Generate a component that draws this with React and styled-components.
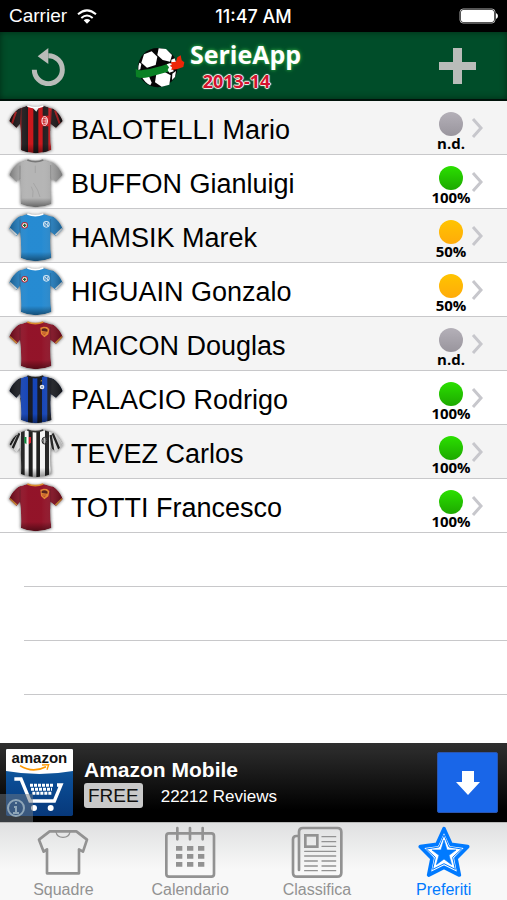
import { useId } from "react";
import styled, { createGlobalStyle } from "styled-components";

const GlobalStyle = createGlobalStyle`
  * {
    box-sizing: border-box;
  }

  body {
    margin: 0;
    background: #fff;
    font-family: "Liberation Sans", Arial, sans-serif;
  }

  a {
    color: inherit;
    text-decoration: none;
  }

  button {
    padding: 0;
    border: 0;
    background: none;
    cursor: pointer;
  }

  svg {
    display: block;
    flex-shrink: 0;
  }
`;

const Screen = styled.div`
  display: flex;
  flex-direction: column;
  min-height: 100vh;
`;

/* status bar */
const StatusBar = styled.div`
  display: grid;
  grid-template-columns: 1fr auto 1fr;
  align-items: center;
  height: 32px;
  padding: 0 9px;
  background: #000;
  color: #fff;
`;

const Carrier = styled.div`
  display: flex;
  align-items: center;
  gap: 10px;
  font-size: 19px;
  line-height: 32px;
`;

const Clock = styled.time`
  font-family: Inter, sans-serif;
  font-size: 18px;
  font-weight: 500;
`;

const Battery = styled.div`
  justify-self: end;
`;

/* header */
const Header = styled.header`
  display: flex;
  align-items: center;
  justify-content: space-between;
  height: 69px;
  padding: 0 31px;
  background: #004d29;
  border-bottom: 2px solid #00120a;
  box-shadow: inset 0 0 6px #002915;
`;

const IconButton = styled.button`
  color: #b9bcb9;
`;

const Logo = styled.h1`
  display: flex;
  align-items: center;
  gap: 3px;
  margin: 0 70px 0 0;
  padding-top: 3px;
  font-family: "Open Sans", sans-serif;
  font-weight: 700;
`;

const LogoText = styled.span`
  display: flex;
  flex-direction: column;
  align-items: center;
`;

const LogoName = styled.span`
  color: #fff;
  font-size: 25px;
  line-height: 28px;
  text-shadow: 0 0 3px #35a845, 0 0 5px #1d8a3a;
`;

const LogoSeason = styled.span`
  margin-right: 18px;
  color: #d3122f;
  font-size: 18px;
  line-height: 26px;
  text-shadow: 1px 0 1px #fff, -1px 0 1px #fff, 0 1px 1px #fff, 0 -1px 1px #fff;
`;

/* players */
const PlayerList = styled.ul`
  flex: 1;
  margin: 0;
  padding: 0;
  list-style: none;
`;

const PlayerItem = styled.li`
  height: 54px;
  border-bottom: 1px solid #c8c8ca;

  &:nth-child(odd) {
    background: #f4f4f4;
  }
`;

const PlayerLink = styled.a`
  display: flex;
  align-items: center;
  height: 53px;
  padding: 0 24px 0 6px;
`;

const PlayerName = styled.span`
  flex: 1;
  margin-left: 5px;
  padding-top: 6px;
  color: #000;
  font-size: 27px;
  line-height: 47px;
  white-space: nowrap;
`;

const Status = styled.span`
  display: flex;
  flex-direction: column;
  align-items: center;
  align-self: flex-start;
  width: 40px;
  padding-top: 11px;
  font-family: "Open Sans", sans-serif;
  font-size: 15px;
  font-weight: 700;
  line-height: 14px;
`;

const dots = {
  none: "linear-gradient(#b4b0b8, #99959d)",
  full: "linear-gradient(#2be000, #1da800)",
  half: "linear-gradient(#ffc400, #ffab0a)",
};

const Dot = styled.span`
  width: 24px;
  height: 24px;
  border-radius: 50%;
  background: ${({ $level }) => dots[$level]};
`;

const EmptyItem = styled.li`
  height: 54px;
  margin-left: 24px;
  border-bottom: 1px solid #c8c8ca;
`;

/* ad */
const Ad = styled.aside`
  position: relative;
  display: flex;
  align-items: center;
  height: 79px;
  padding: 0 9px 0 6px;
  background: linear-gradient(#2f2f2f, #000 85%);
  color: #fff;
`;

const AdIcon = styled.div`
  width: 67px;
  height: 67px;
`;

const AdBody = styled.div`
  flex: 1;
  margin-left: 11px;
`;

const AdTitle = styled.div`
  font-size: 21px;
  font-weight: 700;
  line-height: 26px;
`;

const AdMeta = styled.div`
  display: flex;
  align-items: baseline;
  gap: 18px;
  font-size: 17px;
`;

const Free = styled.span`
  padding: 0 4px;
  border-radius: 3px;
  background: #c9c9c9;
  color: #111;
  font-size: 19px;
  line-height: 25px;
`;

const Download = styled.button`
  display: flex;
  align-items: center;
  justify-content: center;
  width: 61px;
  height: 61px;
  border: 1px solid #2a55b0;
  border-radius: 2px;
  background: #1966e8;
`;

const AdInfo = styled.button`
  position: absolute;
  left: 0;
  bottom: 0;
  width: 33px;
  height: 28px;
  padding-left: 6px;
  background: rgba(110, 120, 130, 0.5);
`;

/* tabs */
const TabBar = styled.nav`
  display: grid;
  grid-template-columns: repeat(4, 1fr);
  height: 78px;
  padding-top: 3px;
  border-top: 1px solid #b8b8b8;
  background: linear-gradient(#dfe0e1, #f8f8f8 60%);
`;

const Tab = styled.a`
  display: flex;
  flex-direction: column;
  align-items: center;
  gap: 2px;
  color: ${({ $active }) => ($active ? "#007aff" : "#929292")};
  font-size: 16px;
  line-height: 20px;
`;

const shirtPath =
  "M64 15 Q88 25 112 15 L142 24 Q160 36 170 60 L150 80 L134 68 Q131 105 136 147 Q88 167 45 147 Q47 105 42 68 L31 80 L10 60 Q19 37 38 24 Z";

const kits = {
  milan: { base: "#c90f14", sleeve: "#171214", trim: "#fff" },
  keeper: { base: "#b2b2b2", sleeve: "#aaa", trim: "#777" },
  napoli: { base: "#1d86d0", sleeve: "#1f80c6", trim: "#fff", cuff: "#e8edf0" },
  roma: { base: "#8e0a20", sleeve: "#860a1e", trim: "#dc8b2b", cuff: "#e0922c" },
  inter: { base: "#0c3db4", sleeve: "#17191f", trim: "#222" },
  juve: { base: "#f5f5f5", sleeve: "#f5f5f5", trim: "#333" },
};

const Badges = ({ kit }) => {
  if (kit === "milan")
    return (
      <g fill="none" stroke="#fff" strokeWidth="3">
        <ellipse cx="116" cy="60" rx="8" ry="13" />
        <path d="M112 53h8v14h-8M112 60h8" strokeWidth="2" />
      </g>
    );
  if (kit === "napoli")
    return (
      <g>
        <circle cx="56" cy="49" r="10" fill="#b72d36" />
        <circle cx="56" cy="49" r="7" fill="#fff" />
        <path d="M56 44v10M51 49h10" stroke="#263" strokeWidth="4" />
        <circle cx="121" cy="46" r="10" fill="#d5e7f5" />
        <circle cx="121" cy="46" r="7" fill="#2d80bf" />
        <path d="M117 51v-10l8 10v-10" stroke="#fff" strokeWidth="2" fill="none" />
      </g>
    );
  if (kit === "roma")
    return (
      <g>
        <path d="M103 32l10-3 10 1 7 7-3 15-12 9-10-10z" fill="#e58a35" />
        <path d="M107 36q9-5 18 2l-1 6-17-2z" fill="#5c231d" />
        <path d="M108 48h13M112 53h6" stroke="#b5482a" strokeWidth="3" />
      </g>
    );
  if (kit === "inter")
    return (
      <g>
        <circle cx="108" cy="48" r="7" fill="#e9e9e9" />
        <circle cx="108" cy="48" r="3" fill="#7896c4" />
        <path d="M103 31l3-4 3 4z" fill="#d7a93e" />
      </g>
    );
  if (kit === "juve")
    return (
      <g>
        <path d="M55 36h7v22l-7-5z" fill="#0b8a3c" />
        <path d="M62 36h6v22h-6z" fill="#fff" />
        <path d="M68 36h7v17l-7 5z" fill="#d4202c" />
        <ellipse cx="115" cy="47" rx="7" ry="10" fill="#ddd" stroke="#222" strokeWidth="3" />
        <path d="M112 40v14M118 40v14" stroke="#222" strokeWidth="2" />
      </g>
    );
  return (
    <g fill="none" stroke="#8f8f8f" strokeWidth="3" opacity="0.4">
      <path d="M88 32v22M76 95q8 12 4 32M82 84q15 20 20 42" />
    </g>
  );
};

const Stripes = ({ kit }) => {
  if (kit === "milan")
    return (
      <path d="M46 10h20v155H46zM82 10h15v155H82zM110 76h17v89h-17zM110 10h17v34h-17z" fill="#171214" />
    );
  if (kit === "inter")
    return <path d="M66 10h14v155H66zM94 10h14v155H94zM124 10h14v155h-14zM40 80h5v85h-5z" fill="#10131c" />;
  if (kit === "juve")
    return (
      <g fill="#161616">
        <path d="M44 10h12v155H44zM68 10h12v155H68zM91 10h11v155H91zM117 10h12v155h-12z" />
      </g>
    );
  return null;
};

function Shirt({ kit }) {
  const id = useId();
  const c = kits[kit];
  return (
    <svg width="60" height="53" viewBox="0 0 180 159" aria-hidden="true">
      <defs>
        <clipPath id={`${id}c`}>
          <path d={shirtPath} />
        </clipPath>
        <linearGradient id={`${id}g`} x1="0" x2="1">
          <stop offset="0" stopColor="#000" stopOpacity="0.3" />
          <stop offset="0.35" stopColor="#fff" stopOpacity="0.04" />
          <stop offset="0.6" stopColor="#fff" stopOpacity="0.04" />
          <stop offset="1" stopColor="#000" stopOpacity="0.3" />
        </linearGradient>
        <linearGradient id={`${id}b`} x1="0" x2="0" y1="0" y2="1">
          <stop offset="0.8" stopColor="#000" stopOpacity="0" />
          <stop offset="1" stopColor="#000" stopOpacity="0.45" />
        </linearGradient>
        <filter id={`${id}f`} x="-20%" y="-20%" width="140%" height="140%">
          <feGaussianBlur stdDeviation="5" />
        </filter>
      </defs>
      <path d={shirtPath} fill="#333" stroke="#333" strokeWidth="4" opacity="0.6" filter={`url(#${id}f)`} />
      <g clipPath={`url(#${id}c)`}>
        <path d={shirtPath} fill={c.base} />
        <Stripes kit={kit} />
        <path d="M5 5H46L42 90H5z M138 5h40v85h-44z" fill={c.sleeve} />
        {kit === "milan" && (
          <path d="M30 32L18 68M147 28l14 40" stroke="#b81518" strokeWidth="6" />
        )}
        {kit === "juve" && (
          <path d="M40 25L20 70M30 28L12 60M140 25l20 48M134 30l8 50" stroke="#161616" strokeWidth="7" />
        )}
        {c.cuff && (
          <path d="M10 60l21 20M170 60l-20 20" stroke={c.cuff} strokeWidth="9" />
        )}
        <path d="M42 32v40M134 30v40" stroke="#000" strokeWidth="2" opacity="0.3" />
        <path d={shirtPath} fill={`url(#${id}g)`} />
        <path d={shirtPath} fill={`url(#${id}b)`} />
        {kit === "milan" && <path d="M74 14h28L91 32z" fill="#eee" />}
      </g>
      <path d="M64 15Q88 25 112 15" fill="none" stroke={c.trim} strokeWidth="5" />
      <Badges kit={kit} />
    </svg>
  );
}

const Wifi = () => (
  <svg width="20" height="15" viewBox="0 0 60 45" fill="none" stroke="#fff" strokeWidth="6">
    <path d="M3 16Q30-8 57 16M13 27Q30 12 47 27" />
    <path d="M20 34Q30 26 40 34L30 44z" fill="#fff" stroke="none" />
  </svg>
);

const BatteryIcon = () => (
  <svg width="39" height="16" viewBox="0 0 39 16">
    <rect x="1" y="1" width="35" height="14" rx="3" fill="none" stroke="#aaa" />
    <rect x="2" y="2" width="33" height="12" rx="2" fill="#fff" />
    <path d="M37 5q2 1 2 3t-2 3z" fill="#fff" />
  </svg>
);

const Reload = () => (
  <svg width="36" height="40" viewBox="0 0 108 120">
    <path d="M10 71A42 42 0 1 0 52 29" fill="none" stroke="currentColor" strokeWidth="15" />
    <path d="M20 31L52 6v48z" fill="currentColor" />
  </svg>
);

const Plus = () => (
  <svg width="37" height="36" viewBox="0 0 37 36">
    <path d="M14 0h9v14h14v8H23v14h-9V22H0v-8h14z" fill="currentColor" />
  </svg>
);

const Ball = () => (
  <svg width="52" height="43" viewBox="30 27 156 129">
    <circle cx="98" cy="92" r="59" fill="#050505" />
    <g fill="#fff">
      <path d="M57 52l23-9 17 16-5 25-26 8-17-15z" />
      <path d="M101 34l22 2 18 18-6 20-22-5-16-15z" />
      <path d="M139 68l10-4 7 20-8 7-9-8z" />
      <path d="M94 111l25-6 18 10-4 28-23 6-20-13z" />
      <path d="M142 110l11-8-3 18-9 9z" />
      <path d="M49 117l23 1 8 19-4 8q-17-8-27-28z" />
      <path d="M43 77l6 3-3 17-6 2q-1-12 3-22z" />
    </g>
    <path d="M32 95q9 8 24 3 34-4 73-18l7 4-5 8 6 10q-35 10-68 19-19 5-36-2z" fill="#0a8125" />
    <path d="M125 82l11-4 5 7 5 18-13 4-5-8 4-8z" fill="#fff" />
    <path d="M137 76l16-2 4-13 10-6 3 15 8 6-3 14-20 7-16 2 2-8-7-5 7-3z" fill="#ed2608" />
  </svg>
);

const Chevron = () => (
  <svg width="12" height="20" viewBox="0 0 12 20">
    <path d="M2 1l8 9-8 9" fill="none" stroke="#c7c7cc" strokeWidth="3" />
  </svg>
);

const AmazonIcon = () => (
  <svg width="67" height="67" viewBox="0 0 201 201">
    <defs>
      <linearGradient id="amazonBlue" x1="0" x2="0" y1="0" y2="1">
        <stop offset="0" stopColor="#1a6aa8" />
        <stop offset="0.5" stopColor="#0a4b93" />
        <stop offset="1" stopColor="#07387a" />
      </linearGradient>
    </defs>
    <rect width="201" height="201" rx="5" fill="url(#amazonBlue)" />
    <path d="M0 4q0-4 4-4h193q4 0 4 4v62Q100 84 0 66z" fill="#fff" />
    <text x="100" y="42" textAnchor="middle" fontFamily="Liberation Sans" fontWeight="700" fontSize="45" fill="#111">
      amazon
    </text>
    <path d="M42 50q38 24 78 3" fill="none" stroke="#f90" strokeWidth="5" />
    <path d="M108 48l20-1-5 15" fill="none" stroke="#f90" strokeWidth="4" />
    <path d="M25 90h20l27 66h73l20-48h-12" fill="none" stroke="#fff" strokeWidth="10" />
    <path
      d="M72 109h69M75 121h63M79 133h57"
      fill="none"
      stroke="#fff"
      strokeWidth="9"
      strokeDasharray="9 3"
    />
    <circle cx="84" cy="177" r="9" fill="#fff" />
    <circle cx="134" cy="177" r="9" fill="#fff" />
  </svg>
);

const SquadreIcon = () => (
  <svg width="52" height="52" viewBox="0 0 156 156" fill="none" stroke="currentColor" strokeWidth="8" strokeLinejoin="round">
    <path d="M38 16H118L150 41L138 77L126 70V142H30V70L20 77L6 41Z" />
    <path d="M57 18Q60 34 78 34T99 18" strokeWidth="4" />
  </svg>
);

const CalendarioIcon = () => (
  <svg width="52" height="52" viewBox="0 0 156 156" fill="none" stroke="currentColor" strokeWidth="8">
    <rect x="7" y="22" width="143" height="130" rx="8" />
    <path d="M40 6v34M78 6v34M116 6v34" strokeLinecap="round" />
    <path
      d="M36 60h19v14H36zM69 60h19v14H69zM102 60h19v14h-19zM36 84h19v14H36zM69 84h19v14H69zM102 84h19v14h-19zM36 108h19v14H36zM69 108h19v14H69zM102 108h19v14h-19z"
      fill="currentColor"
      stroke="none"
    />
  </svg>
);

const ClassificaIcon = () => (
  <svg width="52" height="52" viewBox="0 0 156 156" fill="none" stroke="currentColor" strokeWidth="8" strokeLinecap="round">
    <path d="M24 30H16Q6 30 6 40V140Q6 152 18 152H138Q151 152 151 140V18Q151 6 139 6H36Q24 6 24 18V132" />
    <rect x="43" y="28" width="36" height="34" />
    <path
      d="M93 32h41M93 47h41M93 61h41M41 76h93M41 90h93M41 105h38M93 105h41M41 120h38M93 120h41M41 134h38M93 134h41"
      strokeWidth="4"
    />
  </svg>
);

const PreferitiIcon = () => (
  <svg width="52" height="52" viewBox="0 0 156 156" fill="currentColor" stroke="currentColor" strokeLinejoin="round">
    <path
      d="M78 8L99 55L149 62L114 97L124 147L78 124L32 147L42 97L7 62L57 55Z"
      fill="#fff"
      strokeWidth="11"
    />
    <path
      d="M78 27L93 63L131 69L104 94L112 130L78 113L44 130L52 94L25 69L63 63Z"
      fill="none"
      strokeWidth="3"
    />
    <path d="M78 42L87 72H114L93 88L101 116L78 99L55 116L63 88L42 72H69Z" strokeWidth="2" />
  </svg>
);

const players = [
  { name: "BALOTELLI Mario", kit: "milan", level: "none", label: "n.d." },
  { name: "BUFFON Gianluigi", kit: "keeper", level: "full", label: "100%" },
  { name: "HAMSIK Marek", kit: "napoli", level: "half", label: "50%" },
  { name: "HIGUAIN Gonzalo", kit: "napoli", level: "half", label: "50%" },
  { name: "MAICON Douglas", kit: "roma", level: "none", label: "n.d." },
  { name: "PALACIO Rodrigo", kit: "inter", level: "full", label: "100%" },
  { name: "TEVEZ Carlos", kit: "juve", level: "full", label: "100%" },
  { name: "TOTTI Francesco", kit: "roma", level: "full", label: "100%" },
];

const tabs = [
  { label: "Squadre", Icon: SquadreIcon },
  { label: "Calendario", Icon: CalendarioIcon },
  { label: "Classifica", Icon: ClassificaIcon },
  { label: "Preferiti", Icon: PreferitiIcon, active: true },
];

function App() {
  return (
    <Screen>
      <GlobalStyle />
      <StatusBar>
        <Carrier>
          Carrier
          <Wifi />
        </Carrier>
        <Clock>11:47 AM</Clock>
        <Battery>
          <BatteryIcon />
        </Battery>
      </StatusBar>

      <Header>
        <IconButton aria-label="Aggiorna">
          <Reload />
        </IconButton>
        <Logo>
          <Ball />
          <LogoText>
            <LogoName>SerieApp</LogoName>
            <LogoSeason>2013-14</LogoSeason>
          </LogoText>
        </Logo>
        <IconButton aria-label="Aggiungi">
          <Plus />
        </IconButton>
      </Header>

      <PlayerList>
        {players.map(({ name, kit, level, label }) => (
          <PlayerItem key={name}>
            <PlayerLink href="#">
              <Shirt kit={kit} />
              <PlayerName>{name}</PlayerName>
              <Status>
                <Dot $level={level} />
                {label}
              </Status>
              <Chevron />
            </PlayerLink>
          </PlayerItem>
        ))}
        {/* empty rows */}
        <EmptyItem />
        <EmptyItem />
        <EmptyItem />
      </PlayerList>

      <Ad>
        <AdIcon>
          <AmazonIcon />
        </AdIcon>
        <AdBody>
          <AdTitle>Amazon Mobile</AdTitle>
          <AdMeta>
            <Free>FREE</Free>
            <span>22212 Reviews</span>
          </AdMeta>
        </AdBody>
        <Download aria-label="Download">
          <svg width="26" height="24" viewBox="0 0 26 24">
            <path d="M7 0h12v11h6L13 24 1 11h6z" fill="#fff" />
          </svg>
        </Download>
        <AdInfo aria-label="Info">
          <svg width="20" height="20" viewBox="0 0 20 20" fill="none" stroke="#8fa6b8" strokeWidth="2">
            <circle cx="10" cy="10" r="8" />
            <path d="M8 9h2v6M7 15h6M9 5h2" />
          </svg>
        </AdInfo>
      </Ad>

      <TabBar>
        {tabs.map(({ label, Icon, active }) => (
          <Tab key={label} href="#" $active={active}>
            <Icon />
            {label}
          </Tab>
        ))}
      </TabBar>
    </Screen>
  );
}

export default App;
